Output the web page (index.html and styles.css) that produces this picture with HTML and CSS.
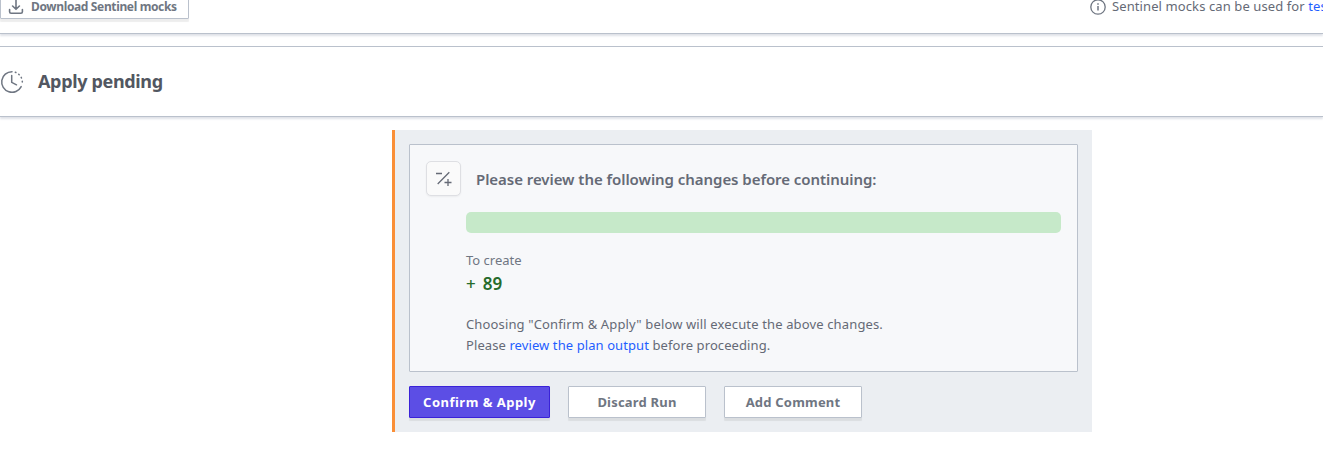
FILE: index.html
```html
<!DOCTYPE html>
<html lang="en">
<head>
<meta charset="utf-8">
<title>Apply pending</title>
<link rel="stylesheet" href="styles.css">
</head>
<body>
<section class="mocks">
  <button class="btn btn-download">
    <svg width="16" height="16" viewBox="0 0 16 16" fill="none" stroke="#6f7682" stroke-width="1.6" stroke-linecap="round" stroke-linejoin="round"><path d="M8 1v9M4.600 7 8 10.300 11.400 7M1.600 10.500v2.200q0 1.500 1.500 1.500h9.800q1.500 0 1.500-1.500v-2.200"/></svg>
    <span class="t-download">Download Sentinel mocks</span>
  </button>
  <div class="hint">
    <svg width="16" height="16" viewBox="0 0 16 16" fill="none" stroke="#6f7682" stroke-width="1.300"><circle cx="8" cy="8" r="7.200"/><path d="M8 7v4.500M8 4.200v1.500" stroke-width="1.500"/></svg>
    <span class="t-hint">Sentinel mocks can be used for <a>testing</a></span>
  </div>
</section>
<section class="stage">
  <svg width="24" height="24" viewBox="0 0 24 24" fill="none" stroke="#6f7682" stroke-width="1.500" stroke-linecap="round"><path d="M12 1.700A10.300 10.300 0 1 0 21.200 16.600"/><path d="M15.300 2.250l.6.220M18.700 4.200l.5.480M21.200 7.400l.25.550M22.300 11.300v.8"/><path d="M11.700 5.500v6.800l4.800 2.500"/></svg>
  <h2 class="t-stage">Apply pending</h2>
</section>
<main class="confirm">
  <div class="review">
    <header class="review-head">
      <span class="tile"><svg width="17" height="17" viewBox="0 0 17 17" fill="none" stroke="#656a76" stroke-width="1.300"><path d="M1 3.500h6M14.300 2.300 2.700 14M9.500 12.500h7M13 9v7"/></svg></span>
      <h3 class="t-title">Please review the following changes before continuing:</h3>
    </header>
    <div class="review-body">
      <div class="bar"></div>
      <div class="label"><span class="t-label">To create</span></div>
      <div class="count"><span class="t-plus">+</span><span class="t-count">89</span></div>
      <p class="note"><span class="t-note1">Choosing "Confirm &amp; Apply" below will execute the above changes.</span><br><span class="t-note2">Please <a>review the plan output</a> before proceeding.</span></p>
    </div>
  </div>
  <div class="actions">
    <button class="btn btn-primary"><span class="t-confirm">Confirm &amp; Apply</span></button>
    <button class="btn"><span class="t-discard">Discard Run</span></button>
    <button class="btn"><span class="t-comment">Add Comment</span></button>
  </div>
</main>
</body>
</html>
```
FILE: styles.css
```css
* { box-sizing: border-box; }
html, body { margin: 0; height: 466px; overflow: hidden; }
body {
  background: #fff;
  color: #656a76;
  font: 13px/21px "Noto Sans", "Open Sans", sans-serif;
}
h2, h3, p { margin: 0; white-space: nowrap; }
svg { display: block; flex: none; }
a { color: #1f5eff; }

.mocks {
  display: flex;
  justify-content: space-between;
  align-items: flex-start;
  height: 34px;
  border-bottom: 1px solid #bac1cc;
  box-shadow: 0 2px 2px #dfe2e8;
}
.btn {
  display: flex;
  align-items: center;
  justify-content: center;
  width: 138px;
  height: 32px;
  padding: 0;
  border: 1px solid #bac1cc;
  border-radius: 1px;
  background: #fff;
  box-shadow: 0 3px 1px rgba(0, 0, 0, 0.07);
  color: #6f7682;
  font: 700 13px/20px "Noto Sans", "Open Sans", sans-serif;
  letter-spacing: 0.2px;
  white-space: nowrap;
}
.btn-download {
  width: 189px;
  height: 31px;
  margin-top: -12px;
  padding-left: 7px;
  padding-top: 6px;
  justify-content: flex-start;
  gap: 7px;
  font-size: 12px;
  letter-spacing: -0.36px;
}
.hint {
  display: flex;
  align-items: center;
  gap: 6px;
  width: 233px;
  height: 21px;
  margin-top: -4px;
  letter-spacing: 0.1px;
  white-space: nowrap;
}
.stage {
  display: flex;
  align-items: center;
  gap: 14px;
  height: 71px;
  margin-top: 12px;
  border: solid #bac1cc;
  border-width: 1px 0;
  box-shadow: 0 2px 2px #dfe2e8;
}
.stage h2 { margin-top: -2px; color: #525761; font-size: 18px; line-height: 26px; font-weight: 700; letter-spacing: -0.34px; }

.confirm {
  width: 700px;
  height: 302px;
  margin: 13px 0 0 392px;
  padding: 14px 14px 0;
  border-left: 3px solid #fa8f37;
  background: #ebeef2;
}
.review {
  width: 669px;
  height: 228px;
  padding: 16px;
  border: 1px solid #bac1cc;
  border-radius: 1px;
  background: #f7f8fa;
}
.review-head { display: flex; align-items: center; gap: 15px; height: 35px; }
.review-head h3 { font-size: 15px; line-height: 22px; font-weight: 600; letter-spacing: -0.05px; }
.tile {
  display: flex;
  align-items: center;
  justify-content: center;
  width: 35px;
  height: 35px;
  border: 1px solid #dedfe3;
  border-radius: 5px;
  background: #fafafa;
  box-shadow: 0 1px 2px rgba(0, 0, 0, 0.05);
}
.review-body { padding: 16px 0 0 40px; }
.bar { height: 21px; border-radius: 5px; background: #c6e9c9; }
.label { margin-top: 17px; color: #6f7682; }
.count { display: flex; gap: 7px; height: 26px; color: #266b2b; font-size: 17px; line-height: 26px; font-weight: 500; }
.t-count { font-weight: 600; }
.note { margin-top: 17px; }
.t-note1 { letter-spacing: 0.14px; }
.t-note2 { letter-spacing: 0.09px; }
.actions { display: flex; gap: 18px; margin-top: 14px; }
.btn-primary { width: 141px; border-color: #3a22d8; background: #5c4ee5; color: #fff; }
.t-confirm { letter-spacing: 0.48px; }
```
